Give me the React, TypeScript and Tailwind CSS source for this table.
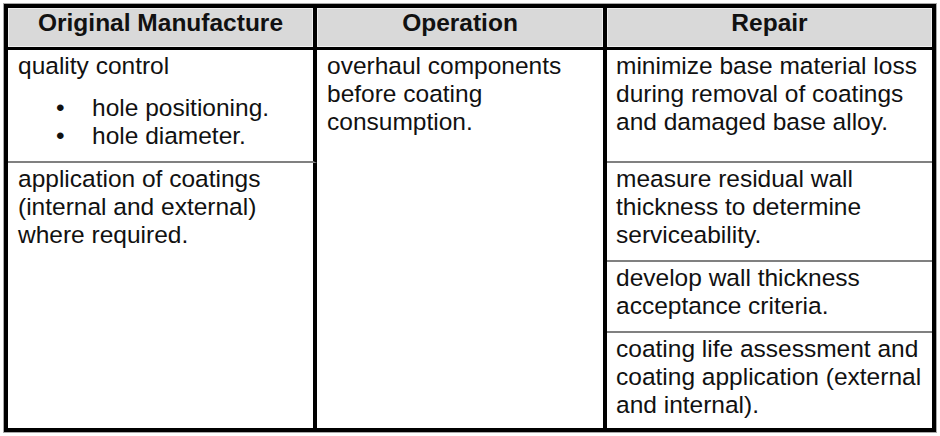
import React from 'react';

const headCell = 'h-[42px] border-b-[3px] border-black bg-[#d9d9d9] shadow-[inset_0_0_0_1px_#eeeeee] text-center font-bold leading-[28px] pt-px';
const rowLine = 'border-b-2 border-[#808080]';

export default function App() {
  return (
    <div className="w-[940px] h-[436px] bg-white p-[4px]">
      <div className="grid h-[428px] w-[932px] grid-cols-[309px_290px_325px] grid-rows-[42px_auto_auto_auto_1fr] border-4 border-black font-['Liberation_Sans',Arial,sans-serif] text-[24.5px] leading-[28px] text-[#111] shadow-[0_0_0_1px_#a8a8a8]">
        {/* header */}
        <div className={`${headCell} border-r-4`}>Original Manufacture</div>
        <div className={`${headCell} border-r-4`}>Operation</div>
        <div className={headCell}>Repair</div>

        {/* row 1 */}
        <div className={`border-r-4 border-r-black ${rowLine} pl-[10px] pr-[6px] pt-[2px] pb-[11px]`}>
          <p>quality control</p>
          <ul className="mt-[14px]">
            <li className="flex">
              <span className="w-[74px] shrink-0 pl-[38px]">•</span>
              <span>hole positioning.</span>
            </li>
            <li className="flex">
              <span className="w-[74px] shrink-0 pl-[38px]">•</span>
              <span>hole diameter.</span>
            </li>
          </ul>
        </div>
        <div className="row-span-4 border-r-4 border-black pl-[10px] pr-[6px] pt-[2px]">
          overhaul components before coating consumption.
        </div>
        <div className={`${rowLine} pl-[9px] pr-[2px] pt-[2px]`}>
          minimize base material loss during removal of coatings and damaged base alloy.
        </div>

        {/* row 2 */}
        <div className="row-span-3 border-r-4 border-black pl-[10px] pr-[6px] pt-[2px]">
          application of coatings (internal and external) where required.
        </div>
        <div className={`${rowLine} pl-[9px] pr-[2px] pt-[2px] pb-[11px]`}>
          measure residual wall thickness to determine serviceability.
        </div>

        {/* row 3 */}
        <div className={`${rowLine} pl-[9px] pr-[2px] pt-[2px] pb-[11px]`}>
          develop wall thickness acceptance criteria.
        </div>

        {/* row 4 */}
        <div className="pl-[9px] pr-[2px] pt-[2px]">
          coating life assessment and coating application (external and internal).
        </div>
      </div>
    </div>
  );
}
